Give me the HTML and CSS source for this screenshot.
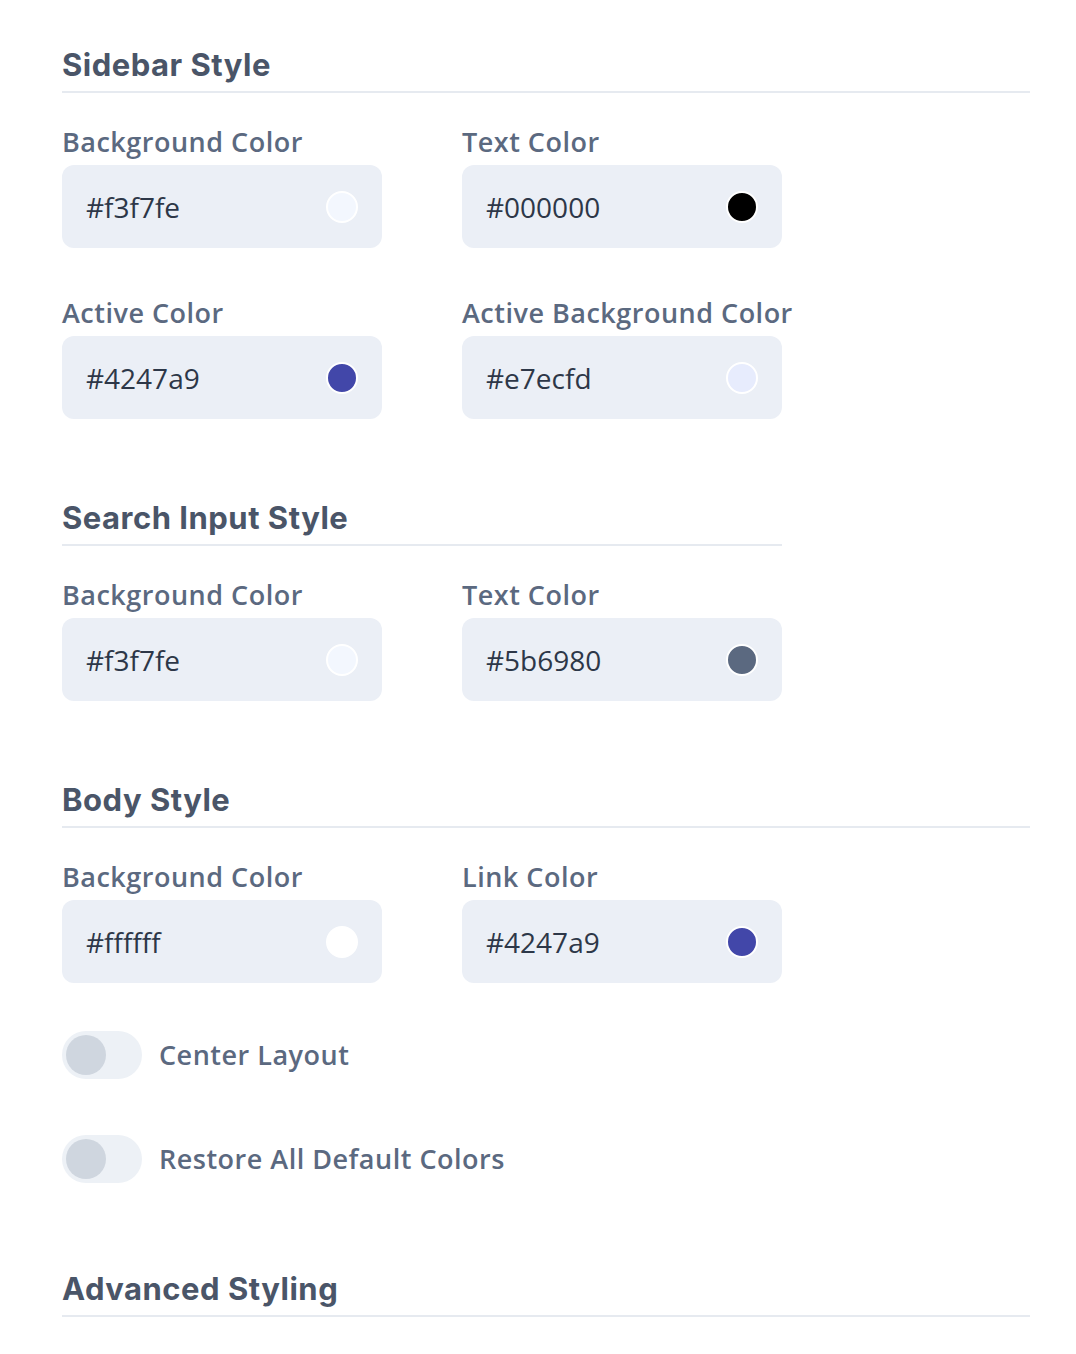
FILE: index.html
```
<!DOCTYPE html>
<html>
<head>
<meta charset="utf-8">
<link rel="stylesheet" href="styles.css">
</head>
<body>
<div class="page">
  <section class="section">
    <h2 class="heading">Sidebar Style</h2>
    <div class="grid">
      <div class="field">
        <div class="label">Background Color</div>
        <div class="input"><span class="value">#f3f7fe</span><span class="swatch" style="background:#f3f7fe"></span></div>
      </div>
      <div class="field">
        <div class="label">Text Color</div>
        <div class="input"><span class="value">#000000</span><span class="swatch" style="background:#000000"></span></div>
      </div>
      <div class="field">
        <div class="label">Active Color</div>
        <div class="input"><span class="value">#4247a9</span><span class="swatch" style="background:#4247a9"></span></div>
      </div>
      <div class="field">
        <div class="label">Active Background Color</div>
        <div class="input"><span class="value">#e7ecfd</span><span class="swatch" style="background:#e7ecfd"></span></div>
      </div>
    </div>
  </section>

  <section class="section narrow">
    <h2 class="heading">Search Input Style</h2>
    <div class="grid">
      <div class="field">
        <div class="label">Background Color</div>
        <div class="input"><span class="value">#f3f7fe</span><span class="swatch" style="background:#f3f7fe"></span></div>
      </div>
      <div class="field">
        <div class="label">Text Color</div>
        <div class="input"><span class="value">#5b6980</span><span class="swatch" style="background:#5b6980"></span></div>
      </div>
    </div>
  </section>

  <section class="section body-section">
    <h2 class="heading">Body Style</h2>
    <div class="grid">
      <div class="field">
        <div class="label">Background Color</div>
        <div class="input"><span class="value">#ffffff</span><span class="swatch" style="background:#ffffff"></span></div>
      </div>
      <div class="field">
        <div class="label">Link Color</div>
        <div class="input"><span class="value">#4247a9</span><span class="swatch" style="background:#4247a9"></span></div>
      </div>
    </div>
    <div class="toggles">
      <label class="toggle-row"><span class="toggle"><span class="knob"></span></span><span class="toggle-text">Center Layout</span></label>
      <label class="toggle-row"><span class="toggle"><span class="knob"></span></span><span class="toggle-text">Restore All Default Colors</span></label>
    </div>
  </section>

  <section class="section last">
    <h2 class="heading">Advanced Styling</h2>
  </section>
</div>
</body>
</html>
```

FILE: styles.css
```
* { box-sizing: border-box; }
html, body { margin: 0; padding: 0; background: #ffffff; }
body { font-family: "Open Sans", "Noto Sans", sans-serif; }

.page {
  padding: 44px 46px 0 62px;
}

.section { width: 968px; margin-bottom: 78px; }
.section.narrow { width: 720px; }
.section.body-section { margin-bottom: 85px; }

.heading {
  margin: 0;
  font-family: Inter, "Open Sans", sans-serif;
  font-weight: 700;
  font-size: 31px;
  line-height: 42px;
  color: #4a5568;
  letter-spacing: 0.5px;
  padding-bottom: 5px;
  border-bottom: 2px solid #e6eaf0;
}

.grid {
  display: grid;
  grid-template-columns: 320px 320px;
  column-gap: 80px;
  row-gap: 46px;
  margin-top: 30px;
}

.label {
  font-size: 27px;
  font-weight: 600;
  line-height: 36px;
  letter-spacing: 0.5px;
  color: #5b6980;
  margin-top: 1px;
  margin-bottom: 5px;
  white-space: nowrap;
}

.input {
  height: 83px;
  border-radius: 12px;
  background: #ebeff6;
  display: flex;
  align-items: center;
  justify-content: space-between;
  padding: 0 24px 0 24px;
}

.value {
  font-size: 28px;
  line-height: 36px;
  color: #2d3748;
}

.swatch {
  width: 32px;
  height: 32px;
  border-radius: 50%;
  border: 2px solid #ffffff;
}

.toggles {
  display: flex;
  flex-direction: column;
  gap: 56px;
  margin-top: 48px;
}

.toggle-row {
  display: flex;
  align-items: center;
  gap: 17px;
}

.toggle {
  width: 80px;
  height: 48px;
  border-radius: 24px;
  background: #edf1f6;
  display: flex;
  align-items: center;
  padding-left: 4px;
}

.knob {
  width: 40px;
  height: 40px;
  border-radius: 50%;
  background: #cfd6df;
}

.toggle-text {
  font-size: 27px;
  font-weight: 600;
  line-height: 36px;
  letter-spacing: 0.5px;
  color: #5b6980;
}
```
